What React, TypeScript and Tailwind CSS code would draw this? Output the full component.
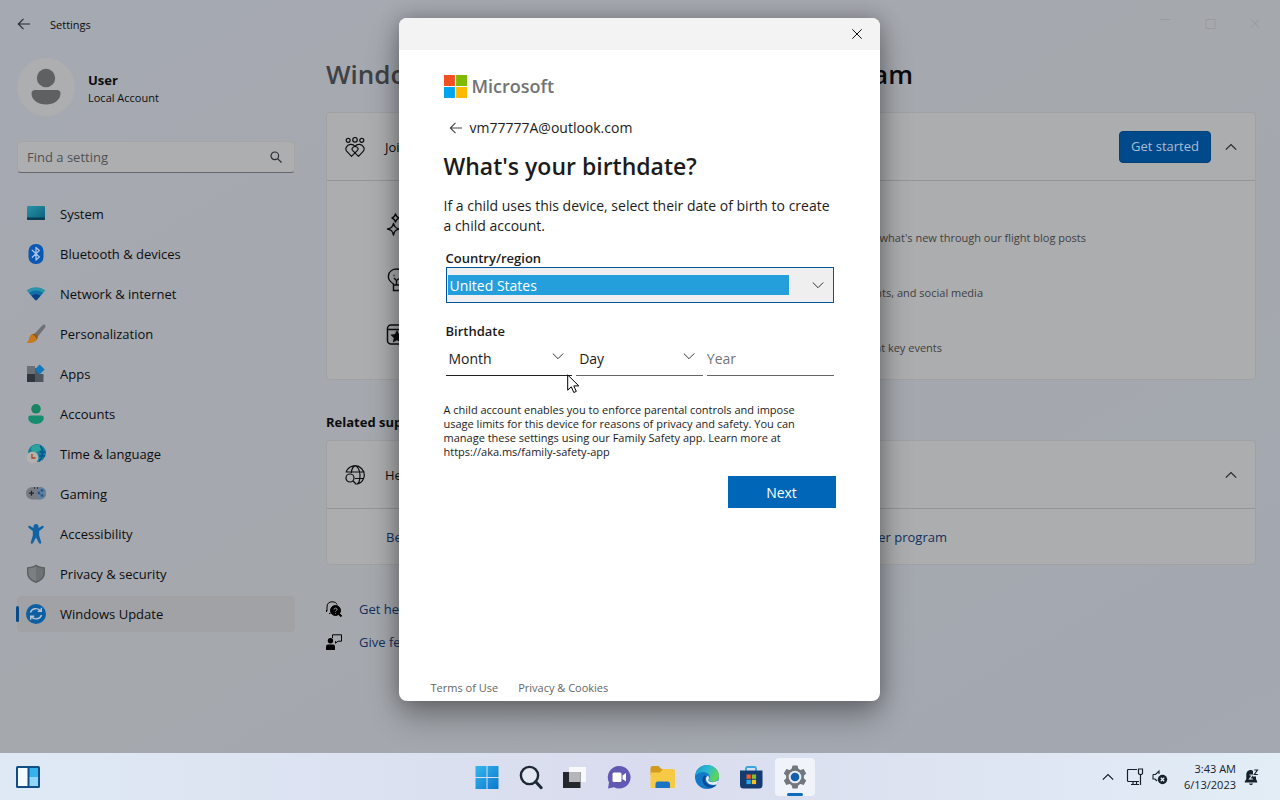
import React, { type ReactNode } from 'react';

const ICON = 'block h-5 w-5 shrink-0';

function SystemIcon() {
  return (
    <svg viewBox="0 0 20 20" className={ICON}>
      <defs>
        <linearGradient id="sys" x1="0" y1="0" x2="1" y2="1">
          <stop offset="0" stopColor="#2794a6" />
          <stop offset="1" stopColor="#0b5f7c" />
        </linearGradient>
      </defs>
      <rect x="1" y="2" width="18" height="14" rx="1" fill="url(#sys)" />
      <path d="M1 13.500h18V15a1 1 0 0 1-1 1H2a1 1 0 0 1-1-1z" fill="#0a3c52" />
    </svg>
  );
}

function BluetoothIcon() {
  return (
    <svg viewBox="0 0 20 20" className={ICON}>
      <rect x="2.500" y="0" width="15" height="20" rx="7" fill="#0b57b4" />
      <path d="M6.300 6.300l7 6.700-3.300 3V3.500l3.300 3-7 6.700" fill="none" stroke="#a9c4e6" strokeWidth="1.300" strokeLinejoin="round" strokeLinecap="round" />
    </svg>
  );
}

function NetworkIcon() {
  return (
    <svg viewBox="0 0 20 20" className={ICON}>
      <path d="M.7 6.500C5.500 2 14.500 2 19.300 6.500L10.700 16q-.7.700-1.400 0z" fill="#2a92ab" />
      <path d="M3 9c3.500-3.300 10.500-3.300 14 0l-6.300 7q-.7.700-1.400 0z" fill="#116fa8" />
      <path d="M5.500 11.800c2.500-2 6.500-2 9 0L10.700 16q-.7.700-1.400 0z" fill="#0a3f88" />
    </svg>
  );
}

function BrushIcon() {
  return (
    <svg viewBox="0 0 20 20" className={ICON}>
      <path d="M18.800.8c1 .8.800 1.800.3 2.600L11.500 13 8 10.300 16.500 1.300c.7-.7 1.500-1 2.300-.5z" fill="#6f7275" />
      <path d="M8 9.800c2.200.2 3.800 1.800 3.700 4C11 18 5 19.800.7 18.700 3.300 17 2.500 14.500 4 12c1-1.500 2.500-2.300 4-2.200z" fill="#c57a1d" />
      <path d="M8 9.800c2.200.2 3.800 1.800 3.700 4l-1.300 1.700C10 12.800 8.500 11.500 6 10.500z" fill="#8d5a1d" />
    </svg>
  );
}

function AppsIcon() {
  return (
    <svg viewBox="0 0 20 20" className={ICON}>
      <path d="M1 2h8v8H1z" fill="#6b6f76" />
      <path d="M1 10h8v8H1z" fill="#30363d" />
      <path d="M9 10h8.500v8H9z" fill="#50565e" />
      <path d="M9 4h5v6H9z" fill="#3c5f70" />
      <path d="M13.600.5l5 5-5 5-4.800-5z" fill="#1478bd" />
    </svg>
  );
}

function AccountsIcon() {
  return (
    <svg viewBox="0 0 20 20" className={ICON}>
      <circle cx="10" cy="4.800" r="4.800" fill="#178463" />
      <path d="M4.500 11.500h11a2.300 2.300 0 0 1 2.300 2.300C17.800 17.500 14.500 20 10 20s-7.800-2.500-7.800-6.200a2.300 2.300 0 0 1 2.300-2.300z" fill="#178d70" />
    </svg>
  );
}

function TimeIcon() {
  return (
    <svg viewBox="0 0 20 20" className={ICON}>
      <circle cx="11" cy="9" r="9" fill="#147f9b" />
      <path d="M6 2.500C9 0 14 0 17 3c-2 1.500-1 3-3.500 3.500S11 10 8 8 4 5 6 2.500z" fill="#2ba59c" />
      <path d="M14 8h5.500M13 12h6M14 1.500c4 5 3 12-1 16" stroke="#0c5591" fill="none" strokeWidth="1.500" />
      <circle cx="6.500" cy="13.500" r="6" fill="#b4b1ae" />
      <path d="M6 10v4h3.500" stroke="#a2452b" fill="none" strokeWidth="1.300" />
    </svg>
  );
}

function GamingIcon() {
  return (
    <svg viewBox="0 0 20 20" className={ICON}>
      <rect y="3" width="20" height="12.500" rx="6.200" fill="#777b82" />
      <path d="M13 3h1a6.200 6.200 0 0 1 0 12.500h-1q-3-6 0-12.500z" fill="#67809c" />
      <path d="M3 9.200h5M5.500 6.700v5" stroke="#20242b" strokeWidth="1.200" />
      <path d="M8 4h1M11 4h1" stroke="#20242b" strokeWidth="1.400" />
      <circle cx="13" cy="9" r="1.400" fill="#23598e" />
      <circle cx="16" cy="6.500" r="1.400" fill="#23598e" />
      <circle cx="16" cy="11.500" r="1.400" fill="#23598e" />
    </svg>
  );
}

function AccessibilityIcon() {
  return (
    <svg viewBox="0 0 20 20" className={ICON}>
      <circle cx="10" cy="2.500" r="2.500" fill="#1163a5" />
      <path d="M2.500 2.300c.5-.8 1.300-.6 1.800-.2C7 4.800 13 4.800 15.700 2.100c.5-.5 1.300-.6 1.800.2.400.7.200 1.200-.3 1.700L13.200 7v4.500l2 6.700c.3 1.500-1.600 2.300-2.300.8L10 13.500 7.100 19c-.7 1.500-2.600.7-2.300-.8l2-6.700V7l-4-3c-.5-.5-.7-1-.3-1.700z" fill="#1163a5" />
    </svg>
  );
}

function ShieldIcon() {
  return (
    <svg viewBox="0 0 20 20" className={ICON}>
      <path d="M10 .5c2.500 2 5.500 2.500 9 2.700V9c0 4.800-3.500 8-9 10C4.500 17 1 13.800 1 9V3.200C4.500 3 7.500 2.500 10 .5z" fill="#5e6163" />
      <path d="M10 2.200c2.300 1.500 4.700 2 7.500 2.300V9c0 3.800-2.800 6.500-7.500 8.300z" fill="#6f7274" />
      <path d="M10 2.200C7.700 3.700 5.300 4.200 2.500 4.500V9c0 3.800 2.800 6.500 7.500 8.300z" fill="#7c7f81" />
    </svg>
  );
}

function UpdateIcon() {
  return (
    <svg viewBox="0 0 20 20" className={ICON}>
      <circle cx="10" cy="10" r="10" fill="#0d5fa3" />
      <path d="M4.500 8.500C5.500 4.500 11.500 3 15 7M15.300 3.800V7.300H11.800M15.500 11C14.500 15 8.500 16.500 5 12.500M4.700 15.800V12.300h3.500" fill="none" stroke="#b6c3cf" strokeWidth="1.400" />
    </svg>
  );
}

const NAV: { label: string; icon: ReactNode; active?: boolean }[] = [
  { label: 'System', icon: <SystemIcon /> },
  { label: 'Bluetooth & devices', icon: <BluetoothIcon /> },
  { label: 'Network & internet', icon: <NetworkIcon /> },
  { label: 'Personalization', icon: <BrushIcon /> },
  { label: 'Apps', icon: <AppsIcon /> },
  { label: 'Accounts', icon: <AccountsIcon /> },
  { label: 'Time & language', icon: <TimeIcon /> },
  { label: 'Gaming', icon: <GamingIcon /> },
  { label: 'Accessibility', icon: <AccessibilityIcon /> },
  { label: 'Privacy & security', icon: <ShieldIcon /> },
  { label: 'Windows Update', icon: <UpdateIcon />, active: true },
];

function BackArrow() {
  return (
    <svg viewBox="0 0 14 14" className="block h-[14px] w-[14px]" fill="none" stroke="currentColor" strokeWidth="1.100">
      <path d="M13 7H1.500M6.500 1.800L1.300 7l5.200 5.200" />
    </svg>
  );
}

function Chevron({ up = false }: { up?: boolean }) {
  return (
    <svg viewBox="0 0 12 12" className="block h-3 w-3" fill="none" stroke="currentColor" strokeWidth={up ? 1.2 : 1}>
      <path d={up ? 'M.8 8.700L6 3.500l5.200 5.200' : 'M.8 3.500L6 8.700l5.200-5.200'} />
    </svg>
  );
}

function Sidebar() {
  return (
    <aside className="flex w-[278px] shrink-0 flex-col">
      <div className="flex items-center gap-[13px]">
        <svg viewBox="0 0 58 58" className="block h-[58px] w-[58px]">
          <circle cx="29" cy="29" r="29" fill="#adaeb0" />
          <circle cx="29" cy="20" r="9.200" fill="#5f6061" />
          <path d="M18 32h22a3.500 3.500 0 0 1 3.500 3.500C43.500 42 37 46.500 29 46.500S14.500 42 14.500 35.500A3.500 3.500 0 0 1 18 32z" fill="#5f6061" />
        </svg>
        <div className="pt-1">
          <p className="text-[13px] leading-[18px] font-bold">User</p>
          <p className="text-[11px] leading-[18px]">Local Account</p>
        </div>
      </div>
      <label className="mt-[25px] flex h-8 items-center rounded-[4px] border border-[#a3a5a7] border-b-[#65676a] bg-[#adaeb0] pr-3 pl-[9px]">
        <input aria-label="Find a setting" placeholder="Find a setting" className="min-w-0 flex-1 bg-transparent pt-0.5 text-[13px] outline-none placeholder:text-[#505154]" />
        <svg viewBox="0 0 12 12" className="block h-3 w-3" fill="none" stroke="#2b2d30" strokeWidth="1.200">
          <circle cx="4.800" cy="4.800" r="3.800" />
          <path d="M7.600 7.600l3.900 3.900" />
        </svg>
      </label>
      <nav className="mt-[23px] flex flex-col gap-1">
        {NAV.map((item) => (
          <a
            key={item.label}
            href="#"
            className={
              item.active
                ? 'relative flex h-9 items-center gap-[14px] rounded-[4px] bg-[#a0a2a6] pl-[9px] text-[13px]'
                : 'relative flex h-9 items-center gap-[14px] rounded-[4px] pl-[9px] text-[13px]'
            }
          >
            {item.active && <span className="absolute top-[10px] left-[-1px] h-4 w-[3px] rounded-full bg-[#084b8a]" />}
            {item.icon}
            <span className="pt-0.5">{item.label}</span>
          </a>
        ))}
      </nav>
    </aside>
  );
}

const CARD = 'rounded-[4px] border border-[#9fa1a3] bg-[#acadae]';

function Benefit({ icon, text, width }: { icon: ReactNode; text: string; width: string }) {
  return (
    <li className="flex h-[55px] items-center gap-5">
      {icon}
      <p className={`self-end pb-[5px] text-right text-[11px] leading-[18px] text-[#3f4042] ${width}`}>{text}</p>
    </li>
  );
}

function Content() {
  return (
    <main className="min-w-0 flex-1">
      <h1 className="flex h-9 w-[587px] items-center justify-between pb-1 text-[26px] leading-8 font-semibold whitespace-nowrap">
        <span className="text-[#3f4144]">Windows</span>
        <span>Program</span>
      </h1>

      <section className={`mt-[18px] ${CARD}`}>
        <div className="flex h-[68px] items-center border-b border-[#939597] pr-[18px] pl-[18px]">
          <svg viewBox="0 0 20 20" className="block h-5 w-5" fill="none" stroke="currentColor" strokeWidth="1.200">
            <circle cx="10" cy="2.800" r="2.300" />
            <circle cx="3.200" cy="3.300" r="2" />
            <circle cx="16.800" cy="3.300" r="2" />
            <path d="M10 9.300C7.500 6.300 3 7 1.300 10.200c-.8 1.600-.4 3.300.8 4.500L6.500 19.300l6-6c1.200-1.300.8-2.700-2.500-4z" />
            <path d="M10 9.300c2.500-3 7-2.300 8.700.9.800 1.600.4 3.300-.8 4.500l-4.400 4.600-6-6c-1.200-1.300-.3-3 2.500-4z" />
          </svg>
          <span className="ml-5 flex-1 pt-0.5 text-[13px]">Join</span>
          <button className="h-8 rounded-[4px] border border-[#00417a] bg-[#004a8b] px-[11px] pt-px text-[13px] text-[#a9bed3]">Get started</button>
          <button aria-label="Collapse" className="ml-[14px] text-[#25272a]"><Chevron up /></button>
        </div>
        <ul className="flex flex-col pt-4 pb-[17px] pl-[59px]">
          <Benefit
            width="w-[656px]"
            text="what's new through our flight blog posts"
            icon={
              <svg viewBox="0 0 24 24" className="block h-6 w-6" fill="none" stroke="currentColor" strokeWidth="1.400" strokeLinejoin="round">
                <path d="M7.500 10.500c1 3.500 2 4.500 5.500 5.500-3.500 1-4.500 2-5.500 6-1-4-2-5-6-6 4-1 5-2 6-5.500zM9.500 1c.6 2.300 1.500 3.200 3.500 4-2 .8-2.900 1.700-3.500 4C8.900 6.700 8 5.800 6 5c2-.8 2.900-1.700 3.500-4z" />
              </svg>
            }
          />
          <Benefit
            width="w-[553px]"
            text="events, and social media"
            icon={
              <svg viewBox="0 0 24 24" className="block h-6 w-6" fill="none" stroke="currentColor" strokeWidth="1.400">
                <path d="M7.500 17v-1C3 13 2 10 2.500 7.500 3 3.500 6.500 1 11 1s8.500 3 8.500 7c0 3-1.500 5-4.500 8v1zM7.500 17v5.500H15V17M8 10l2.500 2.500V17M14 10l-3.500 2.500M7.500 7.500h1" />
              </svg>
            }
          />
          <Benefit
            width="w-[512px]"
            text="at key events"
            icon={
              <svg viewBox="0 0 24 24" className="block h-6 w-6" fill="none" stroke="currentColor" strokeWidth="1.500">
                <rect x="1.500" y="2" width="19" height="19" rx="3.500" />
                <path d="M1.500 6.500h19" />
                <path d="M11 8.500l1.500 3.300 3.500.4-2.600 2.400.7 3.500-3.100-1.800-3.100 1.800.7-3.500L6 12.200l3.500-.4z" fill="currentColor" />
              </svg>
            }
          />
        </ul>
      </section>

      <h2 className="mt-[33px] text-[13px] leading-[18px] font-bold">Related support</h2>
      <section className={`mt-[9px] ${CARD}`}>
        <div className="flex h-[68px] items-center border-b border-[#939597] pr-[18px] pl-[18px]">
          <svg viewBox="0 0 20 20" className="block h-5 w-5" fill="none" stroke="currentColor" strokeWidth="1.200">
            <path d="M1 7.500A9.300 9.300 0 1 1 12.500 19M2 7h17.500M10 13.500h9M6.300 8C6.500 4 8.500.8 10.300.8S15 5 15 10s-1.500 8.500-3 9" />
            <circle cx="5" cy="13" r="4" />
            <path d="M8 16l3.500 3.500" />
          </svg>
          <span className="ml-5 flex-1 pt-0.5 text-[13px]">Help</span>
          <button aria-label="Collapse" className="text-[#25272a]"><Chevron up /></button>
        </div>
        <div className="flex h-[55px] items-center pt-0.5 pl-[59px] text-[13px] text-[#12305f]">
          <div className="flex w-[561px] justify-between">
            <a href="#">Become an Insider</a>
            <a href="#">Insider program</a>
          </div>
        </div>
      </section>

      <div className="mt-[27px] flex flex-col text-[13px] text-[#12305f]">
        <a href="#" className="flex h-[33px] items-center gap-[17px]">
          <svg viewBox="0 0 16 16" className="block h-4 w-4 text-black" fill="none" stroke="currentColor">
            <path d="M1 10V6C1 2.500 3 .8 6 .8S10.500 2 11 3.500M.5 9v2M3 12.500h1.500" />
            <circle cx="9.500" cy="9.500" r="5" fill="currentColor" />
            <path d="M12 12l3.500 3.500" strokeWidth="2" />
            <path d="M8 8.500C8 6.500 11.300 6.800 11 8.500c-.2 1-1.500 1-1.500 2.200M9.500 12v.7" stroke="#a5a7aa" />
          </svg>
          <span className="pt-0.5">Get help</span>
        </a>
        <a href="#" className="flex h-[33px] items-center gap-[17px]">
          <svg viewBox="0 0 16 16" className="block h-4 w-4 text-black" fill="currentColor">
            <circle cx="4.500" cy="6.700" r="2.700" />
            <path d="M0 16v-3.500Q0 10.500 2 10.500h5q2 0 2 2V16z" />
            <path d="M6.500 4V.8h9v6.400H12l-2.500 2V7.200" fill="none" stroke="currentColor" />
          </svg>
          <span className="pt-0.5">Give feedback</span>
        </a>
      </div>
    </main>
  );
}

function Picker({ label, underline }: { label: string; underline: string }) {
  return (
    <div className={`relative flex-1 border-b ${underline}`}>
      <select aria-label={label} className="block h-[35px] w-full appearance-none bg-transparent pt-0.5 pl-[3px] text-[14px] text-[#1b1b1b] outline-none">
        <option>{label}</option>
      </select>
      <span className="pointer-events-none absolute top-[10px] right-2 text-[#333]"><Chevron /></span>
    </div>
  );
}

function Dialog() {
  return (
    <div className="absolute inset-0 flex justify-center pt-[18px] pr-[2px] pb-[52px]">
      <div role="dialog" aria-labelledby="dialog-title" className="flex w-[481px] flex-col overflow-hidden rounded-[8px] bg-white text-[#1b1b1b] shadow-[0_16px_32px_rgba(0,0,0,0.3),0_0_20px_rgba(0,0,0,0.25)]">
        <div className="flex h-8 shrink-0 items-center justify-end bg-[#f3f3f3] pr-[18px]">
          <button aria-label="Close">
            <svg viewBox="0 0 10 10" className="block h-[10px] w-[10px]" stroke="#111" fill="none">
              <path d="M.3.300l9.400 9.400M9.700.300L.3 9.700" />
            </svg>
          </button>
        </div>
        <div className="flex flex-1 flex-col pt-[25px] pr-11 pl-[45px]">
          <div className="flex items-center gap-[5px]">
            <svg viewBox="0 0 23 23" className="block h-[23px] w-[23px]">
              <path d="M0 0h10.900v10.900H0z" fill="#f25022" />
              <path d="M12.100 0H23v10.900H12.100z" fill="#7fba00" />
              <path d="M0 12.100h10.900V23H0z" fill="#00a4ef" />
              <path d="M12.100 12.100H23V23H12.100z" fill="#ffb900" />
            </svg>
            <span className="text-[18px] leading-[23px] font-semibold text-[#737373]">Microsoft</span>
          </div>
          <div className="mt-5 flex h-5 items-center gap-[7px] pl-[5px]">
            <button aria-label="Back" className="text-[#444]"><BackArrow /></button>
            <span className="text-[14px] leading-5">vm77777A@outlook.com</span>
          </div>
          <h2 id="dialog-title" className="mt-[14px] text-[23px] leading-7 font-semibold">What's your birthdate?</h2>
          <p className="mt-4 text-[14px] leading-5 whitespace-nowrap">
            If a child uses this device, select their date of birth to create
            <br />a child account.
          </p>
          <div className="flex flex-col pr-[2px] pl-[2px]">
            <label htmlFor="country" className="mt-[13px] text-[13px] leading-[18px] font-semibold">Country/region</label>
            <div className="relative h-9 border border-[#00559f] bg-[#efefef]">
              <select id="country" className="mt-[7px] ml-px block h-5 w-[341px] appearance-none bg-[#259fdc] pt-0.5 pl-[2px] text-[14px] leading-[18px] text-white outline-none">
                <option>United States</option>
              </select>
              <span className="pointer-events-none absolute top-[11px] right-[9px] text-[#333]"><Chevron /></span>
            </div>
            <p className="mt-[19px] text-[13px] leading-[18px] font-semibold">Birthdate</p>
            <div className="flex gap-1">
              <Picker label="Month" underline="border-[#222]" />
              <Picker label="Day" underline="border-[#666]" />
              <div className="flex-1 border-b border-[#666]">
                <input aria-label="Year" placeholder="Year" className="block h-[35px] w-full bg-transparent pt-0.5 text-[14px] outline-none placeholder:text-[#757575]" />
              </div>
            </div>
          </div>
          <p className="mt-[27px] text-[11px] leading-[14px] whitespace-nowrap">
            A child account enables you to enforce parental controls and impose
            <br />
            usage limits for this device for reasons of privacy and safety. You can
            <br />
            manage these settings using our Family Safety app. Learn more at
            <br />
            https://aka.ms/family-safety-app
          </p>
          <button className="mt-[17px] h-8 w-[108px] self-end bg-[#0067b8] text-[14px] text-white">Next</button>
        </div>
        <footer className="flex gap-5 pb-[5px] pl-8 text-[11px] leading-4 text-[#666]">
          <a href="#">Terms of Use</a>
          <a href="#">Privacy &amp; Cookies</a>
        </footer>
      </div>
      <svg viewBox="0 0 13 20" className="absolute top-[374px] left-1/2 -ml-[73px] h-5 w-[13px]">
        <path d="M.7.900v15.300l3.600-3.400 2.500 5.700 2.500-1.100-2.500-5.500h5z" fill="#fff" stroke="#000" />
      </svg>
    </div>
  );
}

const TASK = 'block h-7 w-7';

function Taskbar() {
  return (
    <footer className="flex h-[47px] shrink-0 items-center bg-linear-to-r from-[#dfe9f5] via-[#d9dcee] to-[#e2edf6]">
      <div className="flex flex-1 items-center pl-[14px]">
        <button aria-label="Widgets">
          <svg viewBox="0 0 28 28" className={TASK}>
            <rect x="2" y="3" width="24" height="22" rx="1.500" fill="#0f4f86" />
            <path d="M4 5h9.500v18H4z" fill="#f4fafe" />
            <path d="M15.500 5H24v9h-8.500z" fill="#35b1ee" />
            <path d="M15.500 14H24v9h-8.500z" fill="#8fd6f8" />
          </svg>
        </button>
      </div>
      <div className="ml-2 flex items-center gap-1">
        {TASKS.map((task) => (
          <button
            key={task.name}
            aria-label={task.name}
            className={
              task.active
                ? 'relative flex h-[38px] w-10 items-center justify-center rounded-[4px] bg-[#f0f3fa]'
                : 'flex h-[38px] w-10 items-center justify-center'
            }
          >
            {task.icon}
            {task.active && <span className="absolute bottom-0 left-3 h-[3px] w-4 rounded-full bg-[#0e6cbd]" />}
          </button>
        ))}
      </div>
      <div className="flex flex-1 items-center justify-end pr-5 text-[#15202b]">
        <Chevron up />
        <svg viewBox="0 0 18 18" className="ml-3 block h-[18px] w-[18px]" fill="none" stroke="currentColor" strokeWidth="1.200">
          <path d="M11 1.500H2.500Q1.500 1.500 1.500 2.500v10q0 1 1 1H13M5 16.500h8M7 13.500v3M10.500 13.500v3" />
          <path d="M12.500 1h4v4.500l-1 1h-2l-1-1zM14.500 6.500V17" />
        </svg>
        <svg viewBox="0 0 16 16" className="ml-2 block h-4 w-4" fill="none" stroke="currentColor" strokeWidth="1.100">
          <path d="M1 5.500h2.500L7 2v3M1 5.500v4.500h2L5 12" />
          <circle cx="10.500" cy="10.500" r="4.700" fill="currentColor" stroke="none" />
          <path d="M8.800 8.800l3.400 3.400M12.200 8.800l-3.400 3.400" stroke="#e3edf6" strokeWidth="1.300" />
        </svg>
        <div className="ml-4 text-right text-[11px] leading-4">
          <p>3:43 AM</p>
          <p>6/13/2023</p>
        </div>
        <svg viewBox="0 0 16 18" className="ml-2 block h-[18px] w-4" fill="currentColor">
          <path d="M7 2C3.500 2 2.300 4.500 2.300 7v4L.8 13.500V14.500h12.400V13.500L12 11V8.500H9V3q-.8-1-2-1zM5 15.500h4q-.5 1.500-2 1.500t-2-1.500z" />
          <path d="M5.500 7h3l-3 4h3.300" fill="none" stroke="#e3edf6" strokeWidth="1.100" />
          <path d="M10.300 2h3.200l-3.200 4.500h3.500" fill="none" stroke="currentColor" strokeWidth="1.100" />
        </svg>
      </div>
    </footer>
  );
}

const TASKS: { name: string; icon: ReactNode; active?: boolean }[] = [
  {
    name: 'Start',
    icon: (
      <svg viewBox="0 0 28 28" className={TASK}>
        <defs>
          <linearGradient id="start" x1="0" y1="0" x2="28" y2="28" gradientUnits="userSpaceOnUse">
            <stop offset="0.100" stopColor="#35b6ee" />
            <stop offset="1" stopColor="#0872c8" />
          </linearGradient>
        </defs>
        <path d="M2.500 3h11v11h-11zM14.500 3h11v11h-11zM2.500 15h11v11h-11zM14.500 15h11v11h-11z" fill="url(#start)" />
      </svg>
    ),
  },
  {
    name: 'Search',
    icon: (
      <svg viewBox="0 0 28 28" className={TASK} fill="none" stroke="#1d2836" strokeWidth="2.400">
        <circle cx="12.500" cy="12.500" r="8.600" fill="#e3e8f3" />
        <path d="M18.700 18.700l5.500 6" strokeWidth="3" strokeLinecap="round" />
      </svg>
    ),
  },
  {
    name: 'Task view',
    icon: (
      <svg viewBox="0 0 28 28" className={TASK}>
        <path d="M8 4h17v15H8z" fill="#f7f8fa" />
        <path d="M2 9h17.500v16H2z" fill="#24272b" />
        <path d="M8 9h11.500v10H8z" fill="#b5b6b9" />
      </svg>
    ),
  },
  {
    name: 'Chat',
    icon: (
      <svg viewBox="0 0 28 28" className={TASK}>
        <path d="M14 3a11.300 11.300 0 1 1-5 21.300L3 25.500l1-6A11.300 11.300 0 0 1 14 3z" fill="#6259b5" />
        <rect x="7.500" y="9.500" width="9" height="9.500" rx="1.500" fill="#fff" />
        <path d="M17.500 12.500l3.500-2.500v8.500l-3.500-2.500z" fill="#fff" />
      </svg>
    ),
  },
  {
    name: 'File Explorer',
    icon: (
      <svg viewBox="0 0 28 28" className={TASK}>
        <path d="M1.500 5a2 2 0 0 1 2-2h6l3 3h4v6h-15z" fill="#d39a20" />
        <path d="M1.500 9.500h9.500L14 6h10.500a1.500 1.500 0 0 1 1.500 1.500V24a1 1 0 0 1-1 1H2.500a1 1 0 0 1-1-1z" fill="#f7ca45" />
        <path d="M6.500 25v-4a2.500 2.500 0 0 1 2.500-2.500h9.500A2.500 2.500 0 0 1 21 21v4z" fill="#1b73c4" />
      </svg>
    ),
  },
  {
    name: 'Edge',
    icon: (
      <svg viewBox="0 0 28 28" className={TASK}>
        <defs>
          <linearGradient id="edgeTop" x1="0" y1="0" x2="1" y2="0.400">
            <stop offset="0" stopColor="#1c93d4" />
            <stop offset="0.550" stopColor="#29bcd0" />
            <stop offset="1" stopColor="#5fd45a" />
          </linearGradient>
        </defs>
        <circle cx="14" cy="14" r="12" fill="#1478c8" />
        <path d="M2.200 13C3 5.500 8.500 2 14 2c7 0 12 5.500 12 10.700 0 4-3 6-6 6-3.500 0-5-1.500-4.500-2.500 1.500-1.500 1.500-3 .5-4.500C13.500 8 6 8 2.200 13z" fill="url(#edgeTop)" />
        <path d="M11.500 12.500c-3.500 2.500-2.500 9 3 11.500 3.500 1.500 7 .5 9-2-6 2-11.500-1.500-11.500-6 0-1.500.8-2.500 1.500-3z" fill="#0c4b95" />
        <path d="M14.800 12.500c1.500 1.300 1.500 3 .5 4.300-.5 1.500 2.500 2.500 5 2.300 2.500 0 4.500-1 5.500-2.500-.5 2.500-1.500 4-2.500 5-5 1.500-10.500-1.500-10.300-5.800.1-1.500.8-2.500 1.800-3.300z" fill="#e6ecf6" />
      </svg>
    ),
  },
  {
    name: 'Store',
    icon: (
      <svg viewBox="0 0 28 28" className={TASK}>
        <path d="M9 8V5.500A1.500 1.500 0 0 1 10.500 4h7A1.500 1.500 0 0 1 19 5.500V8" fill="none" stroke="#39a5dc" strokeWidth="1.800" />
        <path d="M3 7.500h22.500V22a3.500 3.500 0 0 1-3.500 3.500H6.500A3.500 3.500 0 0 1 3 22z" fill="#143c70" />
        <path d="M9.500 11.500h4.300v4.300H9.500z" fill="#f05a2a" />
        <path d="M14.800 11.500h4.300v4.300h-4.300z" fill="#86bf2d" />
        <path d="M9.500 16.800h4.300v4.300H9.500z" fill="#27a8ea" />
        <path d="M14.800 16.800h4.300v4.300h-4.300z" fill="#fbbc1d" />
      </svg>
    ),
  },
  {
    name: 'Settings',
    active: true,
    icon: (
      <svg viewBox="0 0 28 28" className={TASK}>
        <g fill="#72777e">
          <circle cx="14" cy="14" r="9" />
          <path d="M11.500 2.500h5l1 4h-7zM11.500 25.500h5l1-4h-7z" />
          <path d="M11.500 2.500h5l1 4h-7zM11.500 25.500h5l1-4h-7z" transform="rotate(60 14 14)" />
          <path d="M11.500 2.500h5l1 4h-7zM11.500 25.500h5l1-4h-7z" transform="rotate(120 14 14)" />
        </g>
        <circle cx="14" cy="14" r="6.300" fill="#e8edf4" />
        <circle cx="14" cy="14" r="4.300" fill="#0f5fae" />
      </svg>
    ),
  },
];

export default function App() {
  return (
    <div className="flex min-h-screen flex-col font-['Open_Sans','Noto_Sans',sans-serif] text-[#0c0d0f]">
      <div className="relative flex flex-1 flex-col bg-linear-to-br from-[#a5a9b1] via-[#a5a8ad] to-[#a3a8b1]">
        <header className="flex h-12 shrink-0 items-center gap-[19px] pr-5 pl-[17px]">
          <button aria-label="Go back" className="text-[#26282b]"><BackArrow /></button>
          <span className="flex-1 pt-0.5 text-[11px]">Settings</span>
          <svg viewBox="0 0 100 12" className="block h-3 w-[100px]" fill="none" stroke="#989a9d">
            <path d="M0 1.500h10M46 1.500h9v9h-9zM91 1.500l8 8M99 1.500l-8 8" />
          </svg>
        </header>
        <div className="flex flex-1 gap-[31px] pt-[10px] pr-6 pl-[17px]">
          <Sidebar />
          <Content />
        </div>
        <Dialog />
      </div>
      <Taskbar />
    </div>
  );
}
